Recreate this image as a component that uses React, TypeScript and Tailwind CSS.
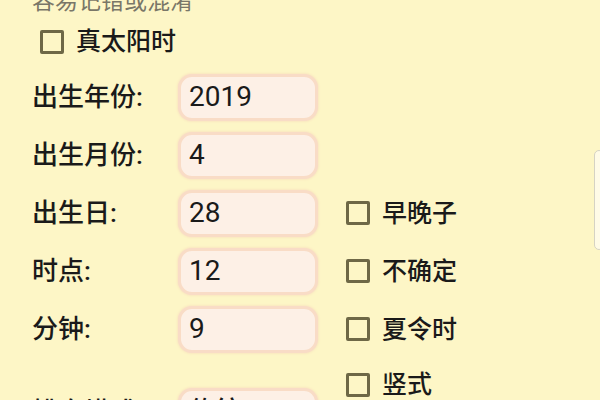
import React from 'react';

const font = { fontFamily: 'Roboto, "Noto Sans CJK SC", sans-serif' };

function Check({ label }: { label: string }) {
    return (
        <div className="flex items-center gap-[12px]">
            <div className="w-[24px] h-[24px] border-[3px] border-[#6e6846] rounded-[2px]" />
            <span className="text-[25px] leading-none font-medium text-[#1a1a1a]">{label}</span>
        </div>
    );
}

function Field({ label, value, check }: { label: string; value: string; check?: string }) {
    return (
        <div className="h-[58px] flex items-center">
            <div className="w-[146px] text-[26px] leading-none font-medium text-[#1a1a1a]">{label}</div>
            <div className="w-[140px] h-[47px] rounded-[14px] bg-[#fdf0e6] border-[3px] border-[#f9dcc6] shadow-[0_0_3px_#f6d6bc] flex items-center px-[8px] text-[28px] text-[#1a1a1a]">
                {value}
            </div>
            {check && (
                <div className="ml-[28px]">
                    <Check label={check} />
                </div>
            )}
        </div>
    );
}

export default function App() {
    return (
        <div className="relative w-[600px] h-[400px] overflow-hidden bg-[#fdf6c6]" style={font}>
            <div className="pl-[32px] -mt-[11px]">
                {/* Hint line, cut at the top */}
                <div className="h-[26px] text-[23px] leading-[26px] text-[#7a7768]">容易记错或混淆</div>

                <div className="h-[53px] flex items-center pl-[8px]">
                    <Check label="真太阳时" />
                </div>

                <Field label="出生年份:" value="2019" />
                <Field label="出生月份:" value="4" />
                <Field label="出生日:" value="28" check="早晚子" />
                <Field label="时点:" value="12" check="不确定" />
                <Field label="分钟:" value="9" check="夏令时" />

                <div className="flex items-start">
                    <div className="w-[146px] mt-[41px] text-[26px] leading-none font-medium text-[#1a1a1a]">排盘模式:</div>
                    <div className="w-[140px] h-[47px] mt-[30px] rounded-[14px] bg-[#fdf0e6] border-[3px] border-[#f9dcc6] shadow-[0_0_3px_#f6d6bc] flex items-center px-[8px] text-[26px] font-medium text-[#1a1a1a]">
                        传统
                    </div>
                    <div className="ml-[28px] mt-[14px]">
                        <Check label="竖式" />
                    </div>
                </div>
            </div>

            {/* scroll thumb */}
            <div className="absolute right-[-4px] top-[150px] w-[10px] h-[100px] rounded-[5px] border border-[#d6d3c4] bg-[#fffbe6]" />
        </div>
    );
}
